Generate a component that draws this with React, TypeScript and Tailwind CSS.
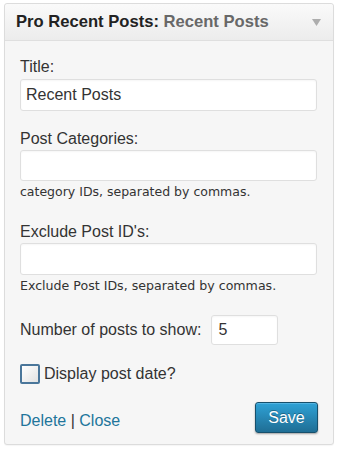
export default function App() {
  return (
    <div className="min-h-[451px] w-[340px] bg-white pt-[3px] pl-[4px]">
      <div
        className="w-[330px] rounded-[3px] border border-[#dcdcdc] bg-[#f6f6f6] shadow-[0_1px_1px_rgba(0,0,0,0.04)]"
        style={{ fontFamily: '"Liberation Sans", Arial, sans-serif' }}
      >
        <div className="flex h-[37px] items-center justify-between rounded-t-[3px] border-b border-[#dfdfdf] bg-gradient-to-b from-[#fafafa] to-[#ececec] pr-[12px] pl-[11px]">
          <div className="text-[16.6px] leading-[20px] font-bold text-[#222]">
            Pro Recent Posts: <span className="text-[#686868]">Recent Posts</span>
          </div>
          <svg width="9" height="7" viewBox="0 0 9 7" className="mt-[1px]">
            <path d="M0 0 L9 0 L4.5 7 Z" fill="#adadad" />
          </svg>
        </div>

        <div className="px-[15px] pt-[17px] pb-[11px] text-[16px] leading-[18px] text-[#333]">
          <div className="mb-[3px]">Title:</div>
          <input
            className="block h-[32px] w-[297px] rounded-[3px] border border-[#dfdfdf] bg-white pl-[5px] text-[16px] text-[#333] shadow-[inset_0_1px_2px_rgba(0,0,0,0.04)] outline-none"
            defaultValue="Recent Posts"
          />

          <div className="mt-[19px] mb-[2px]">Post Categories:</div>
          <input className="block h-[31px] w-[297px] rounded-[3px] border border-[#dfdfdf] bg-white pl-[5px] text-[16px] shadow-[inset_0_1px_2px_rgba(0,0,0,0.04)] outline-none" />
          <div
            className="mt-[3px] text-[12.5px] leading-[15px] text-[#333]"
            style={{ fontFamily: '"DejaVu Sans", Verdana, sans-serif' }}
          >
            category IDs, separated by commas.
          </div>

          <div className="mt-[24px] mb-[2px]">Exclude Post ID's:</div>
          <input className="block h-[32px] w-[297px] rounded-[3px] border border-[#dfdfdf] bg-white pl-[5px] text-[16px] shadow-[inset_0_1px_2px_rgba(0,0,0,0.04)] outline-none" />
          <div
            className="mt-[3px] text-[12.6px] leading-[15px] text-[#333]"
            style={{ fontFamily: '"DejaVu Sans", Verdana, sans-serif' }}
          >
            Exclude Post IDs, separated by commas.
          </div>

          <div className="mt-[22px] flex items-center gap-[10px]">
            <span>Number of posts to show:</span>
            <input
              className="block h-[30px] w-[67px] rounded-[3px] border border-[#dfdfdf] bg-white pl-[6px] text-[16px] text-[#333] shadow-[inset_0_1px_2px_rgba(0,0,0,0.04)] outline-none"
              defaultValue="5"
            />
          </div>

          <div className="mt-[19px] flex items-center gap-[4px]">
            <span className="block h-[20px] w-[20px] rounded-[2px] border-2 border-[#4a769a] bg-gradient-to-br from-[#ffffff] to-[#e2e2e2]" />
            <span>Display post date?</span>
          </div>

          <div className="mt-[18px] flex items-center justify-between">
            <div className="mt-[6px] text-[#21759b]">
              <span>Delete</span>
              <span className="text-[#333]"> | </span>
              <span>Close</span>
            </div>
            <button
              type="button"
              className="h-[31px] w-[63px] rounded-[3px] border border-[#17506c] bg-gradient-to-b from-[#2fa2d6] to-[#1f6e95] text-[16px] leading-[18px] text-white shadow-[0_1px_2px_rgba(0,0,0,0.35),inset_0_1px_0_rgba(120,200,240,0.5)] [text-shadow:0_-1px_0_rgba(0,0,0,0.3)]"
            >
              Save
            </button>
          </div>
        </div>
      </div>
    </div>
  );
}
